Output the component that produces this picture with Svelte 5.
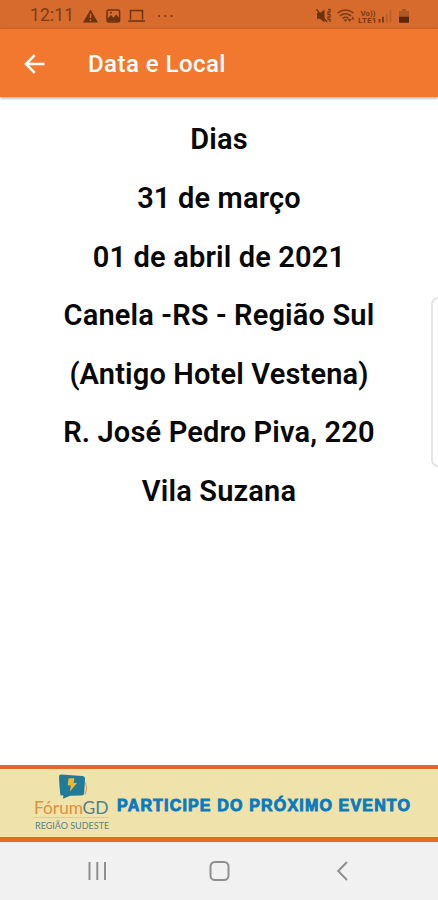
<script>
  const lines = [
    'Dias',
    '31 de março',
    '01 de abril de 2021',
    'Canela -RS - Região Sul',
    '(Antigo Hotel Vestena)',
    'R. José Pedro Piva, 220',
    'Vila Suzana'
  ];
</script>

<div class="screen">
  <div class="status">
    <span class="time">12:11</span>
    <svg class="left-icons" width="94" height="20" viewBox="0 0 94 20">
      <path d="M7.5 4.5 15 17.5H0Z" fill="#6d3210" />
      <path d="M7.5 8.7v4.2M7.5 14.4v1.6" stroke="#d66d2e" stroke-width="1.5" />
      <rect x="24" y="4.9" width="12.6" height="12" rx="1.6" fill="none" stroke="#6d3210" stroke-width="1.5" />
      <path d="M24.5 13.5 28 10l2.5 2.7 2.6-3.2 3.2 3.4v3.6H24.5Z" fill="#6d3210" />
      <circle cx="28" cy="7.8" r="1" fill="#6d3210" />
      <path d="M47.5 14.5V5.5h12v9M45.3 16h16.6" fill="none" stroke="#6d3210" stroke-width="1.5" />
      <g fill="#7a3a15"><circle cx="76" cy="11" r="1.1" /><circle cx="82.3" cy="11" r="1.1" /><circle cx="88.6" cy="11" r="1.1" /></g>
    </svg>
    <svg class="right-icons" width="98" height="20" viewBox="0 0 98 20">
      <path d="M1 8h3L8.500 4.500v13L4 13.800H1Z" fill="#6d3210" />
      <path d="M.5 4.500 11 17" stroke="#6d3210" stroke-width="1.300" />
      <path d="M12 4.500h2v2.500h-2v2.500h2V12h-2v2.500h2V17" fill="none" stroke="#7a3a15" stroke-width="1.300" />
      <g fill="none" stroke="#7a3a15" stroke-width="1.500">
        <path d="M21.500 8Q29.500 2 37.500 8M23.800 10.800q5.700-4.300 11.400 0M26.500 13.500q3-2.400 6 0" />
      </g>
      <path d="m27.500 14.600 2 2.400 2-2.400Z" fill="#7a3a15" />
      <path d="m31.500 14 2.200 3 2-3Z M35 14.500l1.700-3 1.700 3Z" fill="#7a3a15" />
      <text x="44.500" y="10.500" textLength="15" lengthAdjust="spacingAndGlyphs">Vo))</text>
      <text x="42" y="18" textLength="18.500" lengthAdjust="spacingAndGlyphs">LTE1</text>
      <path d="M63.500 14v3.500M67 11.800v5.700" stroke="#7a3a15" stroke-width="1.8" />
      <path d="M70.800 9v8.500M74.500 5v12.500" stroke="#b9602a" stroke-width="1.600" />
      <path d="M86 4h4v2h3v6h-10V6h3Z" fill="#ae5825" />
      <path d="M83 11.800h10v4.800q0 1.200-1.200 1.200h-7.600Q83 17.800 83 16.600Z" fill="#5c260b" />
    </svg>
  </div>
  <header>
    <svg width="22" height="22" viewBox="0 0 22 22"><path d="M21.500 11H3M11.700 2.200 3 11l8.700 8.800" fill="none" stroke="#fff" stroke-width="2.600" /></svg>
    <h1>Data e Local</h1>
  </header>
  <main>
    {#each lines as line}
      <p>{line}</p>
    {/each}
    <div class="edge"></div>
  </main>
  <div class="banner">
    <svg class="logo" width="80" height="64" viewBox="0 -2 80 64">
      <path d="M28 2.500 49 4q3 .2 3 3l-.8 14q-.2 2.500-3 2.500l-11 .3-7.200 3 .4-3.300-3-.3Q26.200 13 26 5q-.2-2.300 2-2.500Z" fill="#207b99" />
      <path d="M52.500 10.500q2.500 7-.5 12" fill="none" stroke="#dc9b5a" stroke-width="1" />
      <path d="m35.500 6.500 5.800-.5-.6 4.700 3.400.3-7.200 8.500.9-6-3.200-.3Z" fill="#f3b52e" />
      <text x="1" y="41.500" class="forum" textLength="49" lengthAdjust="spacingAndGlyphs">Fórum</text>
      <text x="49.500" y="41.500" class="gd" textLength="26" lengthAdjust="spacingAndGlyphs">GD</text>
      <path d="M0 45.500h76" stroke="#cfceb0" stroke-width="1" />
      <text x="2" y="56.500" class="region">REGIÃO SUDESTE</text>
    </svg>
    <span class="cta">PARTICIPE DO PRÓXIMO EVENTO</span>
  </div>
  <nav>
    <svg width="438" height="58" viewBox="0 0 438 58" fill="none" stroke="#8f8f8f" stroke-width="2">
      <path d="M89.500 20v18M97.300 20v18M105 20v18" />
      <rect x="210.500" y="20" width="18" height="18" rx="4.500" />
      <path d="m347 20-8.800 9 8.800 9" />
    </svg>
  </nav>
</div>

<style>
  .screen {
    width: 438px;
    height: 900px;
    display: flex;
    flex-direction: column;
    overflow: hidden;
    background: #fff;
    font-family: Roboto, sans-serif;
  }
  .status {
    flex: 0 0 29px;
    display: flex;
    align-items: center;
    padding: 2px 0 0 30px;
    box-sizing: border-box;
    background: #d66b2d;
  }
  .time {
    width: 53px;
    margin-top: -1px;
    font-size: 17.500px;
    line-height: 20px;
    letter-spacing: .1px;
    color: #7d3c16;
  }
  .left-icons { margin-top: -2px; }
  .right-icons { margin: -2px 0 0 139px; }
  .right-icons text { font: 700 8px Roboto, sans-serif; fill: #7a3a15; }
  header {
    flex: 0 0 68px;
    display: flex;
    align-items: center;
    padding: 1px 0 0 23px;
    box-sizing: border-box;
    background: #f3782f;
    box-shadow: 0 1px 3px rgba(0, 0, 0, .4);
    z-index: 1;
  }
  h1 {
    margin: 1px 0 0 43px;
    font-size: 24px;
    font-weight: 500;
    line-height: 28px;
    letter-spacing: .45px;
    color: #fff;
  }
  main {
    position: relative;
    flex: 1;
    padding: 13.400px 0 0;
  }
  p {
    margin: 0;
    height: 58.600px;
    line-height: 58.600px;
    font-size: 29px;
    font-weight: 600;
    letter-spacing: .16px;
    text-align: center;
    color: #080808;
    white-space: nowrap;
  }
  .edge {
    position: absolute;
    top: 200px;
    right: -9px;
    width: 12px;
    height: 166px;
    border: 2px solid #e4e4e4;
    border-radius: 7px;
    background: #fff;
  }
  .banner {
    flex: 0 0 77px;
    display: flex;
    align-items: center;
    box-sizing: border-box;
    padding-left: 33px;
    background: #efe2aa;
    border-top: 4px solid #e06b27;
    border-bottom: 5px solid #e56b23;
  }
  .logo { margin-top: -2px; flex: none; overflow: visible; }
  .forum { font: 400 18px Lato, sans-serif; fill: #dc913c; }
  .gd { font: 400 18px Lato, sans-serif; fill: #527f8d; }
  .region { font: 400 9px Lato, sans-serif; fill: #5c7f8b; }
  .cta {
    margin: 5px 0 0 4px;
    font: 900 16px "Liberation Sans", Arial, sans-serif;
    color: #087bbf;
    -webkit-text-stroke: .9px #087bbf;
    letter-spacing: 1.170px;
    white-space: nowrap;
  }
  nav { flex: 0 0 58px; background: #f1f1f1; }
  nav svg { display: block; }
</style>
